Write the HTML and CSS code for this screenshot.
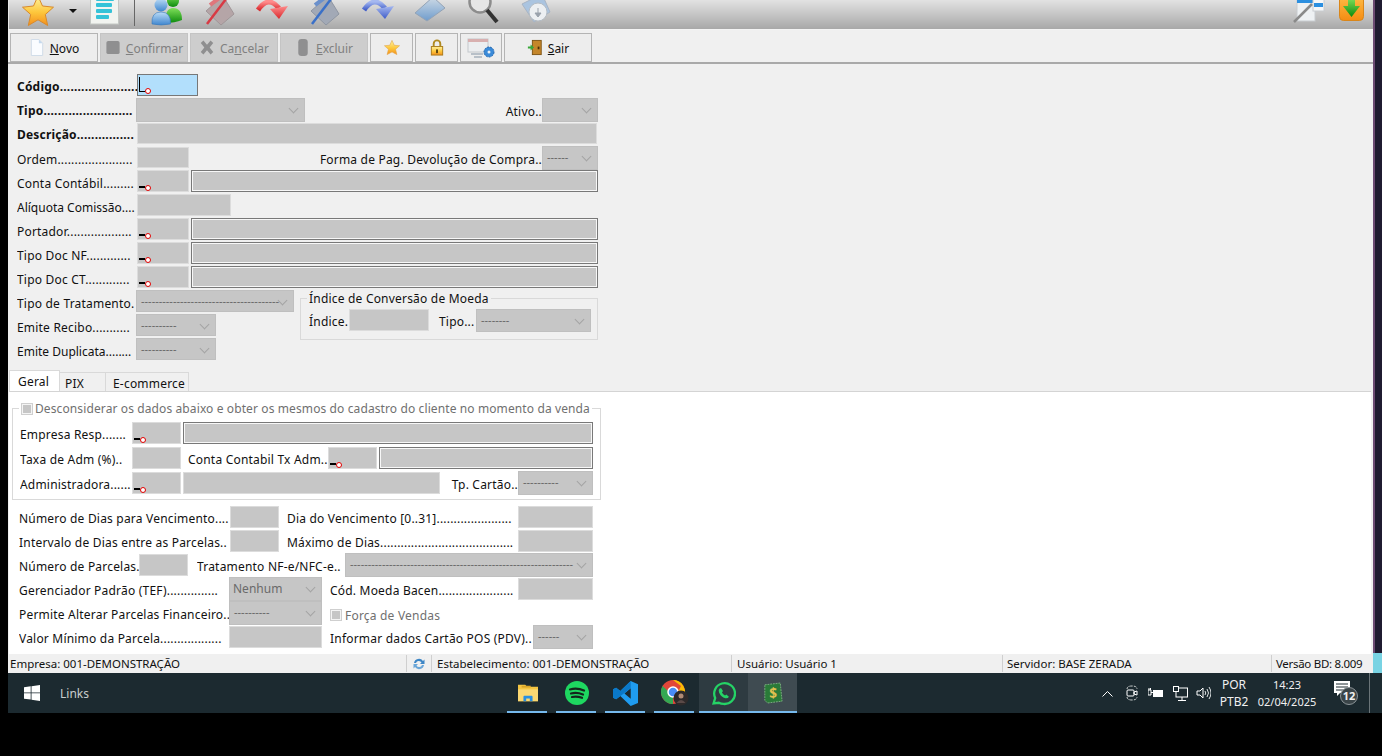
FILE: index.html
```html
<!DOCTYPE html>
<html lang="pt-BR">
<head>
    <meta charset="UTF-8">
    <title>Cadastro de Forma de Pagamento</title>
    <link rel="stylesheet" href="styles.css">
</head>
<body>
<svg class="defs" width="0" height="0">
    <defs>
        <linearGradient id="gStar" x1="0" y1="0" x2="0" y2="1"><stop offset="0" stop-color="#fff3a0"/><stop offset=".55" stop-color="#fdc73c"/><stop offset="1" stop-color="#f48f1c"/></linearGradient>
        <linearGradient id="gBlue" x1="0" y1="0" x2="0" y2="1"><stop offset="0" stop-color="#bcdcf6"/><stop offset="1" stop-color="#3f86cf"/></linearGradient>
        <linearGradient id="gGreen" x1="0" y1="0" x2="0" y2="1"><stop offset="0" stop-color="#7fe05a"/><stop offset="1" stop-color="#0c8a0c"/></linearGradient>
        <linearGradient id="gRed" x1="0" y1="0" x2="0" y2="1"><stop offset="0" stop-color="#ff8c8c"/><stop offset="1" stop-color="#d8282c"/></linearGradient>
        <linearGradient id="gArrowBlue" x1="0" y1="0" x2="0" y2="1"><stop offset="0" stop-color="#a5b8f0"/><stop offset="1" stop-color="#3f5cc8"/></linearGradient>
        <linearGradient id="gOrange" x1="0" y1="0" x2="0" y2="1"><stop offset="0" stop-color="#ffc04a"/><stop offset="1" stop-color="#f58c12"/></linearGradient>
        <linearGradient id="gFolder" x1="0" y1="0" x2="0" y2="1"><stop offset="0" stop-color="#cfdbe6"/><stop offset="1" stop-color="#6f9ccc"/></linearGradient>
    </defs>
</svg>

<div class="screen">
    <div class="window">
        <div class="toolbar">
            <svg class="ico-star" viewBox="0 0 32 32"><polygon points="16,1 20.5,11 31.5,12.2 23.3,19.5 25.7,30.5 16,24.8 6.3,30.5 8.7,19.5 .5,12.2 11.5,11" fill="url(#gStar)" stroke="#d98a2b"/></svg>
            <span class="caret-down"></span>
            <svg class="ico-doc" viewBox="0 0 29 32"><rect x=".5" y="-4" width="28" height="34" fill="#f2f4f0" stroke="#c4c8c4"/><rect x="6" y="3" width="18" height="4" rx="1" fill="#35c3d8"/><rect x="6" y="9" width="16" height="4" rx="1" fill="#35c3d8"/><rect x="6" y="15" width="16" height="4" rx="1" fill="#35c3d8"/><rect x="6" y="21" width="13" height="4" rx="1" fill="#35c3d8"/></svg>
            <span class="tool-sep"></span>
            <div class="tools">
                <svg class="tool" viewBox="0 -5 32 32"><circle cx="22" cy="2" r="6" fill="url(#gGreen)"/><path d="M14 24 Q14 9 22 9 Q31 9 31 21 Q24 24 14 24Z" fill="url(#gGreen)"/><circle cx="10" cy="6" r="6.500" fill="url(#gBlue)"/><path d="M1 25 Q0 13 10 13 Q20 13 19.500 25 Q10 27 1 25Z" fill="url(#gBlue)" stroke="#3a78b8" stroke-width=".6"/></svg>
                <svg class="tool" viewBox="0 -5 32 32"><polygon points="2,12 19,-3 30,15 17,26" fill="#b5a5a7" stroke="#a09698"/><path d="M6 6 L18 -3" stroke="#e0767c" stroke-width="4"/><path d="M3 25 L22 0" stroke="#d83a44" stroke-width="2.500"/></svg>
                <svg class="tool" viewBox="0 -5 32 32"><path d="M2 11 Q12 -4 23 9" fill="none" stroke="url(#gRed)" stroke-width="5"/><polygon points="14,10 32,7 23,20" fill="url(#gRed)"/></svg>
                <svg class="tool" viewBox="0 -5 32 32"><polygon points="2,12 19,-3 30,15 17,26" fill="#a2a9b6" stroke="#8f96a2"/><path d="M6 6 L18 -3" stroke="#6a90cc" stroke-width="4"/><path d="M3 25 L22 0" stroke="#3a70c8" stroke-width="2.500"/></svg>
                <svg class="tool" viewBox="0 -5 32 32"><path d="M2 11 Q12 -4 23 9" fill="none" stroke="url(#gArrowBlue)" stroke-width="5"/><polygon points="14,10 32,7 23,20" fill="url(#gArrowBlue)"/></svg>
                <svg class="tool" viewBox="0 -5 32 32"><polygon points="1,14 19,-2 31,9 13,22" fill="url(#gFolder)" stroke="#93a3b6"/></svg>
                <svg class="tool" viewBox="0 -5 32 32"><circle cx="13" cy="3" r="10.500" fill="#e6e6e6" stroke="#8c8c8c" stroke-width="2.500"/><path d="M20 11 L30 23" stroke="#333" stroke-width="4"/></svg>
                <svg class="tool" viewBox="0 -5 32 32"><polygon points="2,5 22,-5 30,13 14,23" fill="#aac4e0" stroke="#a8b4c4"/><circle cx="18" cy="13" r="9" fill="#eceff2" stroke="#b4bcc4"/><path d="M18 9v5m-3 0h6l-3 4z" fill="#9aa2ac" stroke="#9aa2ac"/></svg>
            </div>
            <div class="tools-right">
                <svg class="ico-edit" viewBox="0 0 32 32"><rect x="3" y="0" width="18" height="27" fill="#eef1f3" stroke="#c8ccd0"/><rect x="3" y="5" width="18" height="4" fill="#2b8fe0"/><rect x="19" y="0" width="11" height="17" fill="#f6f7f8" stroke="#c8ccd0"/><rect x="20" y="9" width="9" height="4" fill="#2b8fe0"/><path d="M0 28 L18 10" stroke="#8a8a8a" stroke-width="2.500"/></svg>
                <svg class="ico-down" viewBox="0 0 26 24"><rect x=".5" y="-8" width="24" height="26.500" rx="4" fill="url(#gOrange)" stroke="#d9861a"/><path d="M9 -4h7v8h5l-8.500 11-8.500-11h5z" fill="url(#gGreen)"/></svg>
            </div>
        </div>

        <div class="actions">
            <button class="btn"><svg class="btn-ico" viewBox="0 0 16 18"><path d="M2 .5h8l4 4v13H2z" fill="#fafcff" stroke="#cfdbe8"/><path d="M10 .5v4h4z" fill="#c4d8ec"/></svg><span><u>N</u>ovo</span></button>
            <button class="btn off"><svg class="btn-ico" viewBox="0 0 16 18"><rect x="1" y="2" width="14" height="14" rx="2" fill="#8f8f90"/></svg><span><u>C</u>onfirmar</span></button>
            <button class="btn off"><svg class="btn-ico" viewBox="0 0 18 18"><path d="M2 4l3-3 4 5 4-5 3 3-4 5 4 5-3 3-4-5-4 5-3-3 4-5z" fill="#8f8f90"/></svg><span>Ca<u>n</u>celar</span></button>
            <button class="btn off"><svg class="btn-ico" viewBox="0 0 16 18"><rect x="3" y="0" width="10" height="18" rx="3.500" fill="#8f8f90"/></svg><span><u>E</u>xcluir</span></button>
            <button class="btn small"><svg class="btn-ico" viewBox="0 0 18 18"><polygon points="9,1 11.5,6.5 17.5,7 13,11 14.5,17 9,14 3.5,17 5,11 .5,7 6.5,6.5" fill="url(#gStar)" stroke="#e0a040" stroke-width=".6"/></svg></button>
            <button class="btn small"><svg class="btn-ico" viewBox="0 0 16 18"><path d="M4.500 8V5a3.500 3.500 0 017 0v3" fill="none" stroke="#b08a20" stroke-width="2"/><rect x="2" y="8" width="12" height="9" fill="url(#gStar)" stroke="#a87a18"/><rect x="7" y="11" width="2" height="4" fill="#5a4410"/></svg></button>
            <button class="btn small narrow"><svg class="ico-config" viewBox="0 0 30 22"><rect x="2" y="2" width="20" height="13" fill="#eceef0" stroke="#c4c8cc"/><rect x="2" y="2" width="20" height="3" fill="#d8b0b0"/><path d="M5 17h12M8 20h8" stroke="#b8c0c8" stroke-width="2"/><circle cx="23" cy="15" r="5" fill="#3a8ad8" stroke="#2468b0" stroke-dasharray="2 1"/><circle cx="23" cy="15" r="1.500" fill="#e8f0f8"/></svg></button>
            <button class="btn"><svg class="btn-ico" viewBox="0 0 18 18"><rect x="6" y="1" width="10" height="16" fill="#c4862a" stroke="#7a5010"/><rect x="12" y="8" width="2" height="3" fill="#4a3008"/><path d="M1 8h3V5.500l4 3.500-4 3.500V10H1z" fill="#3aa83a"/></svg><span><u>S</u>air</span></button>
        </div>

        <div class="form">
            <div class="row">
                <label class="lbl lbl-main strong">Código......................</label>
                <div class="fld focus w61"><i class="mask full"></i></div>
            </div>
            <div class="row">
                <label class="lbl lbl-main strong">Tipo.........................</label>
                <div class="sel shift w169"></div>
                <label class="lbl-r">Ativo..</label>
                <div class="sel w56"></div>
            </div>
            <div class="row">
                <label class="lbl lbl-main strong">Descrição................</label>
                <div class="fld w460 thin"></div>
            </div>
            <div class="row">
                <label class="lbl lbl-main">Ordem......................</label>
                <div class="fld w52 thin"></div>
                <label class="lbl-r">Forma de Pag. Devolução de Compra..</label>
                <div class="sel w56">------</div>
            </div>
            <div class="row">
                <label class="lbl lbl-main">Conta Contábil.........</label>
                <div class="fld w52"><i class="mask"></i></div>
                <div class="fld dark grow"></div>
            </div>
            <div class="row">
                <label class="lbl lbl-main tight">Alíquota Comissão....</label>
                <div class="fld w94"></div>
            </div>
            <div class="row">
                <label class="lbl lbl-main">Portador...................</label>
                <div class="fld w52"><i class="mask"></i></div>
                <div class="fld dark grow"></div>
            </div>
            <div class="row">
                <label class="lbl lbl-main">Tipo Doc NF.............</label>
                <div class="fld w52"><i class="mask"></i></div>
                <div class="fld dark grow"></div>
            </div>
            <div class="row">
                <label class="lbl lbl-main">Tipo Doc CT.............</label>
                <div class="fld w52"><i class="mask"></i></div>
                <div class="fld dark grow"></div>
            </div>
            <div class="split">
                <div class="split-left">
                    <div class="row">
                        <label class="lbl lbl-main">Tipo de Tratamento.</label>
                        <div class="sel shift w158">---------------------------------------</div>
                    </div>
                    <div class="row">
                        <label class="lbl lbl-main">Emite Recibo...........</label>
                        <div class="sel shift w80">----------</div>
                    </div>
                    <div class="row">
                        <label class="lbl lbl-main tight">Emite Duplicata........</label>
                        <div class="sel shift w80">----------</div>
                    </div>
                </div>
                <fieldset class="group group-index">
                    <legend>Índice de Conversão de Moeda</legend>
                    <div class="row">
                        <label class="lbl-idx">Índice.</label>
                        <div class="fld w80"></div>
                        <label class="lbl-tipo">Tipo...</label>
                        <div class="sel w115">--------</div>
                    </div>
                </fieldset>
            </div>
        </div>

        <div class="tabs">
            <div class="tab active">Geral</div>
            <div class="tab tab-pix">PIX</div>
            <div class="tab tab-ecom">E-commerce</div>
        </div>

        <div class="panel">
            <fieldset class="group group-resp">
                <legend class="muted"><span class="check"></span>Desconsiderar os dados abaixo e obter os mesmos do cadastro do cliente no momento da venda</legend>
                <div class="row">
                    <label class="lbl lbl-resp">Empresa Resp.......</label>
                    <div class="fld w49"><i class="mask"></i></div>
                    <div class="fld dark grow"></div>
                </div>
                <div class="row">
                    <label class="lbl lbl-resp">Taxa de Adm (%)..</label>
                    <div class="fld w49"></div>
                    <label class="lbl lbl-tx">Conta Contabil Tx Adm..</label>
                    <div class="fld w49"><i class="mask"></i></div>
                    <div class="fld dark grow"></div>
                </div>
                <div class="row">
                    <label class="lbl lbl-resp">Administradora......</label>
                    <div class="fld w49"><i class="mask"></i></div>
                    <div class="fld w257"></div>
                    <label class="lbl-r">Tp. Cartão..</label>
                    <div class="sel w75">----------</div>
                </div>
            </fieldset>

            <div class="bottom">
                <div class="row">
                    <label class="lbl lbl-a">Número de Dias para Vencimento....</label>
                    <div class="fld w49"></div>
                    <label class="lbl lbl-b">Dia do Vencimento [0..31]......................</label>
                    <div class="fld w75"></div>
                </div>
                <div class="row">
                    <label class="lbl lbl-a">Intervalo de Dias entre as Parcelas..</label>
                    <div class="fld w49"></div>
                    <label class="lbl lbl-b">Máximo de Dias.......................................</label>
                    <div class="fld w75"></div>
                </div>
                <div class="row">
                    <label class="lbl lbl-c">Número de Parcelas.</label>
                    <div class="fld w49"></div>
                    <label class="lbl lbl-d">Tratamento NF-e/NFC-e..</label>
                    <div class="sel w248">---------------------------------------------------------------</div>
                </div>
                <div class="row">
                    <label class="lbl lbl-a">Gerenciador Padrão (TEF)...............</label>
                    <div class="sel shift w93 val">Nenhum</div>
                    <label class="lbl lbl-e">Cód. Moeda Bacen......................</label>
                    <div class="fld w75"></div>
                </div>
                <div class="row">
                    <label class="lbl lbl-a">Permite Alterar Parcelas Financeiro..</label>
                    <div class="sel shift w93">----------</div>
                    <label class="check-line muted"><span class="check"></span>Força de Vendas</label>
                </div>
                <div class="row">
                    <label class="lbl lbl-a">Valor Mínimo da Parcela..................</label>
                    <div class="fld shift w93"></div>
                    <label class="lbl lbl-f">Informar dados Cartão POS (PDV)..</label>
                    <div class="sel w60">------</div>
                </div>
            </div>
        </div>

        <div class="status">
            <div class="st st-empresa">Empresa: 001-DEMONSTRAÇÃO</div>
            <div class="st st-refresh"><svg width="14" height="14" viewBox="0 0 14 14"><path d="M2 6a5 5 0 019-2l1.500-1.500V7H8l1.500-1.500a3 3 0 00-5.500.5z" fill="#3d86c6"/><path d="M12 8a5 5 0 01-9 2L1.500 11.500V7H6L4.500 8.500a3 3 0 005.500-.5z" fill="#6aa6d8"/></svg></div>
            <div class="st st-estab">Estabelecimento: 001-DEMONSTRAÇÃO</div>
            <div class="st st-user">Usuário: Usuário 1</div>
            <div class="st st-server">Servidor: BASE ZERADA</div>
            <div class="st st-versao">Versão BD: 8.009</div>
        </div>
    </div>
    <div class="side">
        <div class="side-top"></div>
        <div class="side-cyan"></div>
    </div>
</div>

<div class="taskbar">
    <svg class="win-logo" viewBox="0 0 16 16"><path d="M0 2.300l6.700-1v6.200H0zM7.500 1.200L16 0v7.500H7.500zM0 8.300h6.700v6.300L0 13.700zM7.500 8.300H16V16l-8.500-1.200z" fill="#fff"/></svg>
    <span class="links">Links</span>
    <div class="task-apps">
        <div class="app run">
            <svg width="22" height="20" viewBox="0 0 24 22"><path d="M1 2h8l2 2h12v16H1z" fill="#f4c542"/><rect x="1" y="7" width="22" height="13" fill="#fbd872"/><path d="M7 20v-5a1 1 0 011-1h8a1 1 0 011 1v5h-3v-3h-4v3z" fill="#2a8fe0"/><rect x="5" y="3" width="10" height="2" fill="#d8a428"/></svg>
        </div>
        <div class="app run">
            <svg width="24" height="24" viewBox="0 0 24 24"><circle cx="12" cy="12" r="12" fill="#1ed760"/><path d="M5 8.500q7-2 14 1M6 12.500q6-1.500 12 1M7 16q5-1 10 .8" fill="none" stroke="#14251c" stroke-width="2.200" stroke-linecap="round"/></svg>
        </div>
        <div class="app run">
            <svg width="25" height="25" viewBox="0 0 24 24"><path d="M17 0l7 3v18l-7 3L7 14.500 3 17.500 0 16V8l3-1.500 4 3zM17 7l-6 5 6 5z" fill="#1f9cf0" fill-rule="evenodd"/><path d="M17 0L7 9.500 3 6.500 0 8v8l3 1.500L17 7z" fill="#0a78c8"/></svg>
        </div>
        <div class="app run">
            <svg width="28" height="26" viewBox="0 0 28 26"><circle cx="12" cy="12" r="12" fill="#e2463a"/><path d="M12 24a12 12 0 01-10.400-18L8 12l4 1z" fill="#34a853"/><path d="M12 0a12 12 0 0110.400 18L16 14l4-8z" fill="#fbbc05"/><circle cx="12" cy="12" r="5" fill="#4a8df6" stroke="#fff" stroke-width="1.500"/><circle cx="20" cy="18" r="7.500" fill="#2e2a2a"/><circle cx="20" cy="16" r="2.500" fill="#b08a74"/><path d="M15.500 23q4.500-6 9 0z" fill="#5a4a48"/></svg>
        </div>
        <div class="app run open">
            <svg width="25" height="25" viewBox="0 0 24 24"><path d="M2.500 21.500l1.500-5.200A10 10 0 1112 22a10 10 0 01-4.500-1.100z" fill="none" stroke="#25d366" stroke-width="2.200"/><path d="M8.500 7q-1.800 1.500-.8 4 2 4.500 6 5.500 2.500.5 3.500-1.500l-2.500-2-1.200 1q-2-1-3-3l1-1.300L9.800 7z" fill="#25d366"/></svg>
        </div>
        <div class="app run current">
            <svg width="20" height="22" viewBox="0 0 22 24"><path d="M2 3l17-2 2 20-16 2-3-3z" fill="#2a7a38" stroke="#7fae84" stroke-dasharray="2 1"/><text x="7" y="18" class="dollar">$</text></svg>
        </div>
    </div>
    <div class="tray">
        <svg class="t-up" viewBox="0 0 11 7"><path d="M.5 6.500l5-5 5 5" fill="none" stroke="#fff"/></svg>
        <svg class="t-cam" viewBox="0 0 12 16"><path d="M1 4q0-3 5-3t5 3M1 12q0 3 5 3t5-3" fill="none" stroke="#c8cccc" stroke-dasharray="3 1"/><rect x="1" y="5" width="7" height="6" rx="1" fill="none" stroke="#fff"/><path d="M8 7l3-1v4l-3-1z" fill="none" stroke="#fff"/></svg>
        <svg class="t-bat" viewBox="0 0 16 12"><rect x="5" y="3" width="10" height="7" fill="#fff"/><path d="M0 3h3v5H0zM1 1v2M2.500 1v2M3 5.500h2" stroke="#fff" fill="none"/></svg>
        <svg class="t-net" viewBox="0 0 15 15"><rect x="3" y="2" width="11.500" height="9" fill="none" stroke="#fff"/><rect x=".5" y=".5" width="5" height="5" fill="#1c2a30" stroke="#fff"/><path d="M9 11v3M5 14.500h8" stroke="#fff"/></svg>
        <svg class="t-vol" viewBox="0 0 15 14"><path d="M1 5h3l3-3v10l-3-3H1z" fill="none" stroke="#fff"/><path d="M9 5q1.500 2 0 4M11 3q3 4 0 8M13 1q4 6 0 12" fill="none" stroke="#dfe3e3"/></svg>
        <div class="lang"><span>POR</span><span>PTB2</span></div>
        <div class="clock"><span>14:23</span><span>02/04/2025</span></div>
        <div class="notif">
            <svg class="n-msg" viewBox="0 0 16 16"><path d="M0 0h16v12H6l-3 3v-3H0z" fill="#fff"/><path d="M2 3h12M2 6h12M2 9h8" stroke="#1c2a30"/></svg>
            <span class="n-badge">12</span>
        </div>
        <span class="t-end"></span>
    </div>
</div>
</body>
</html>
```

FILE: styles.css
```css
* {
    box-sizing: border-box;
}
html, body {
    height: 100%;
}
body {
    margin: 0;
    padding-left: 8px;
    background-color: #000;
    font-family: "Noto Sans", Tahoma, sans-serif;
    font-size: 12px;
    color: #111;
    overflow: hidden;
}
.defs {
    position: absolute;
}
.screen {
    display: flex;
    height: 673px;
}
.window {
    width: 1365px;
    display: flex;
    flex-direction: column;
    background-color: #f0f0f0;
}
.side {
    flex: 1;
    display: flex;
    flex-direction: column;
}
.side-top {
    flex: 1;
    background-color: #1f1b30;
    border-left: 2px solid #6b4a72;
}
.side-cyan {
    height: 20px;
    background-color: #78d3e3;
}

/* top toolbar */
.toolbar {
    height: 30px;
    flex: none;
    display: flex;
    align-items: flex-end;
    padding: 0 8px 3px 13px;
    background: linear-gradient(#e2e2e2, #a8a8a8);
    border-left: 1px solid #e8e8e8;
    border-bottom: 1px solid #f4f4f4;
    overflow: hidden;
}
.toolbar svg {
    overflow: visible;
}
.ico-star {
    width: 32px;
    height: 32px;
    flex: none;
    margin-bottom: -1px;
}
.caret-down {
    width: 0;
    height: 0;
    margin: 0 0 13px 15px;
    border-left: 4px solid transparent;
    border-right: 4px solid transparent;
    border-top: 4px solid #111;
}
.ico-doc {
    width: 29px;
    height: 32px;
    margin-left: 13px;
    flex: none;
}
.tool-sep {
    width: 1px;
    height: 27px;
    margin: 0 16px 0 15px;
    background-color: #666;
}
.tools {
    display: flex;
    gap: 20.7px;
}
.tool {
    width: 32px;
    height: 32px;
    flex: none;
}
.tools-right {
    margin-left: auto;
    display: flex;
    align-items: flex-end;
    gap: 13px;
}
.ico-edit {
    width: 32px;
    height: 32px;
}
.ico-down {
    width: 26px;
    height: 24px;
}

/* action buttons */
.actions {
    height: 34px;
    flex: none;
    display: flex;
    gap: 2px;
    padding: 3px 0 0 2px;
    border-bottom: 2px solid #a9a9a9;
}
.btn {
    width: 88px;
    height: 29px;
    display: flex;
    align-items: center;
    justify-content: center;
    gap: 5px;
    padding: 0;
    background-color: #ededed;
    border: 1px solid #b4b4b4;
    font: inherit;
    color: #111;
}
.btn span {
    padding-top: 2px;
}
.btn.off {
    background-color: #cdcdcd;
    border-color: #c4c4c4;
    color: #808080;
}
.btn.small {
    width: 43px;
}
.btn.narrow {
    width: 42px;
}
.btn-ico {
    width: 16px;
    height: 17px;
    flex: none;
}
.ico-config {
    width: 30px;
    height: 22px;
}

/* form */
.form {
    flex: none;
    padding: 10px 0 0 9px;
    width: 590px;
    letter-spacing: .2px;
}
.form .fld {
    align-self: flex-start;
}
.row {
    display: flex;
    align-items: center;
    height: 24px;
}
.lbl {
    flex: none;
    overflow: hidden;
    white-space: nowrap;
    padding-top: 3px;
}
.lbl.strong {
    font-weight: bold;
    padding-top: 0;
}
.lbl.tight {
    letter-spacing: 0;
}
.lbl-main {
    width: 120px;
}
.lbl-r {
    margin-left: auto;
    white-space: nowrap;
    padding-top: 3px;
}
.fld, .sel {
    position: relative;
    flex: none;
    height: 22px;
    background-color: #c6c6c6;
}
.fld {
    border: 1px solid #dcdcdc;
}
.form .fld.thin {
    height: 21px;
    margin-top: 1px;
}
.fld.dark {
    border-color: #787878;
    box-shadow: inset 0 0 0 1px #f7f7f7;
}
.fld.focus {
    background-color: #b2dffc;
    border-color: #777;
}
.sel {
    height: 24px;
    padding: 0 0 0 4px;
    border: 1px solid #bfbfbf;
    font-size: 11px;
    line-height: 20px;
    color: #666;
    white-space: nowrap;
    overflow: hidden;
    letter-spacing: 0;
}
.sel::after {
    content: "";
    position: absolute;
    right: 7px;
    top: 6px;
    width: 6px;
    height: 6px;
    border-right: 1px solid #a4a4a4;
    border-bottom: 1px solid #a4a4a4;
    transform: rotate(45deg);
}
.shift {
    margin-left: -1px;
}
.sel.val {
    padding: 1px 0 0 3px;
    font-size: 12px;
    color: #6a6a6a;
}
.grow {
    flex: 1;
    margin-left: 2px;
}
.w49 { width: 49px; }
.w52 { width: 52px; }
.w56 { width: 56px; }
.w60 { width: 60px; }
.w61 { width: 61px; }
.w75 { width: 75px; }
.w80 { width: 80px; }
.w93 { width: 93px; }
.w94 { width: 94px; }
.w115 { width: 115px; }
.w158 { width: 158px; }
.w169 { width: 169px; }
.w248 { width: 248px; }
.w257 { width: 257px; margin-left: 2px; }
.w460 { width: 460px; }

/* the little cursor/marker the app paints inside masked inputs */
.mask {
    position: absolute;
    left: 1px;
    bottom: 3px;
    width: 6px;
    height: 2px;
    background-color: #000;
}
.mask::after {
    content: "";
    position: absolute;
    left: 6px;
    top: -1px;
    width: 4px;
    height: 4px;
    border-radius: 50%;
    background-color: #fff;
    border: 1px solid #e00000;
}
.mask.full {
    left: 1px;
    bottom: 3px;
    height: 15px;
    background: linear-gradient(#000, #000) left / 1px 100% no-repeat, linear-gradient(#000, #000) bottom / 100% 1px no-repeat;
}
.mask.full::after {
    top: auto;
    bottom: -2px;
}

.split {
    display: flex;
}
.split-left {
    width: 283px;
    flex: none;
}
.split-left .sel {
    height: 22px;
    align-self: flex-start;
}
.group {
    margin: 0;
    padding: 0;
    border: 1px solid #d9d9d9;
}
.group legend {
    padding: 1px 2px 0;
    line-height: 16px;
    height: 16px;
}
.group-index {
    width: 298px;
    height: 50px;
    padding-left: 8px;
}
.group-index legend {
    margin-left: -2px;
}
.group-index .row {
    margin-top: 2px;
}
.group-index .fld {
    margin-top: 1px;
}
.group-index .sel {
    height: 23px;
}
.lbl-idx {
    width: 40px;
    padding-top: 3px;
}
.lbl-tipo {
    margin-left: 10px;
    width: 37px;
    padding-top: 3px;
}

/* tabs */
.tabs {
    flex: none;
    height: 21px;
    margin: 8px 0 0 1px;
    display: flex;
    align-items: flex-end;
    letter-spacing: .2px;
}
.tab {
    height: 19px;
    padding: 2px 0 0 5px;
    border: 1px solid #d9d9d9;
    border-bottom: none;
    border-left: none;
    background-color: #f0f0f0;
}
.tab.active {
    width: 51px;
    height: 21px;
    padding: 2px 0 0 8px;
    background-color: #fff;
    border-left: 1px solid #d9d9d9;
}
.tab-pix { width: 46px; }
.tab-ecom { width: 83px; padding-left: 7px; }

.panel {
    flex: 1;
    margin: 0 2px 0 1px;
    padding: 8px 0 0 3px;
    background-color: #fff;
    border-top: 1px solid #d4d4d4;
    letter-spacing: .2px;
}
.group-resp {
    width: 589px;
    height: 100px;
    padding: 0 7px 0 7px;
}
.group-resp .row {
    height: 25px;
}
.group-resp legend {
    margin-left: -1px;
    margin-bottom: 4px;
    padding-top: 1px;
    display: flex;
    align-items: center;
    white-space: nowrap;
    letter-spacing: .11px;
}
.muted {
    color: #707070;
}
.check {
    width: 12px;
    height: 12px;
    flex: none;
    margin-right: 2px;
    display: inline-block;
    background-color: #c6c6c6;
    border: 2px solid #f4f4f4;
    outline: 1px solid #cfcfcf;
    outline-offset: -1px;
}
.lbl-resp { width: 112px; }
.lbl-tx {
    width: 140px;
    margin-left: 7px;
}
.bottom {
    margin-top: 5px;
    padding-left: 7px;
    width: 581px;
}
.lbl-a { width: 211px; }
.lbl-b { width: 231px; margin-left: 8px; }
.lbl-c { width: 120px; }
.lbl-d { width: 148px; margin-left: 9px; }
.lbl-e { width: 188px; margin-left: 8px; }
.lbl-f { width: 203px; margin-left: 8px; }
.check-line {
    margin-left: 8px;
    display: flex;
    align-items: center;
    padding-top: 4px;
}
.check-line .check {
    margin-right: 3px;
}

/* status bar */
.status {
    height: 19px;
    flex: none;
    display: flex;
    align-items: center;
    background-color: #f0f0f0;
    font-size: 11.5px;
}
.st {
    height: 17px;
    line-height: 17px;
    padding-left: 4px;
    border-right: 1px solid #cfcfcf;
    white-space: nowrap;
}
.st-empresa { width: 399px; padding-left: 2px; }
.st-refresh { width: 25px; padding: 2px 0 0 5px; }
.st-estab { width: 300px; padding-left: 5px; }
.st-user { width: 271px; padding-left: 5px; }
.st-server { width: 269px; }
.st-versao { flex: 1; border-right: none; letter-spacing: -.3px; }

/* windows taskbar */
.taskbar {
    height: 40px;
    display: flex;
    align-items: center;
    background-color: #1c2a30;
    color: #f0f0f0;
    font-size: 12px;
}
.win-logo {
    width: 16px;
    height: 16px;
    margin-left: 16px;
    flex: none;
}
.links {
    margin-left: 20px;
    width: 443px;
    color: #c8cccc;
}
.task-apps {
    display: flex;
    height: 40px;
}
.app {
    width: 49px;
    height: 40px;
    display: flex;
    align-items: center;
    justify-content: center;
    position: relative;
    flex: none;
}
.app.run::after {
    content: "";
    position: absolute;
    left: 4px;
    right: 5px;
    bottom: 0;
    height: 2px;
    background-color: #76b9ed;
}
.app.open {
    background-color: #2e3b41;
}
.app.open::after, .app.current::after {
    left: 0;
    right: 0;
}
.app.current {
    background-color: #3f4b51;
}
.dollar {
    font-size: 15px;
    font-weight: bold;
    fill: #e0c050;
}
.tray {
    display: flex;
    align-items: center;
    margin-left: auto;
    height: 40px;
}
.t-up { width: 11px; height: 7px; }
.t-cam { width: 12px; height: 16px; margin-left: 13px; }
.t-bat { width: 16px; height: 12px; margin-left: 10px; }
.t-net { width: 15px; height: 15px; margin-left: 9px; }
.t-vol { width: 15px; height: 14px; margin-left: 8px; }
.lang, .clock {
    display: flex;
    flex-direction: column;
    align-items: center;
    line-height: 17px;
}
.lang {
    width: 26px;
    margin-left: 10px;
}
.clock {
    width: 58px;
    margin-left: 11px;
    font-size: 11px;
}
.notif {
    position: relative;
    width: 24px;
    height: 24px;
    margin-left: 18px;
}
.n-msg {
    width: 16px;
    height: 16px;
    display: block;
}
.n-badge {
    position: absolute;
    left: 6px;
    top: 6px;
    width: 18px;
    height: 18px;
    border-radius: 50%;
    background-color: #3a4448;
    border: 1px solid #8c9498;
    font-size: 11px;
    font-weight: bold;
    line-height: 16px;
    text-align: center;
}
.t-end {
    width: 1px;
    height: 40px;
    margin: 0 12px 0 11px;
    background-color: #6a7478;
}
```
